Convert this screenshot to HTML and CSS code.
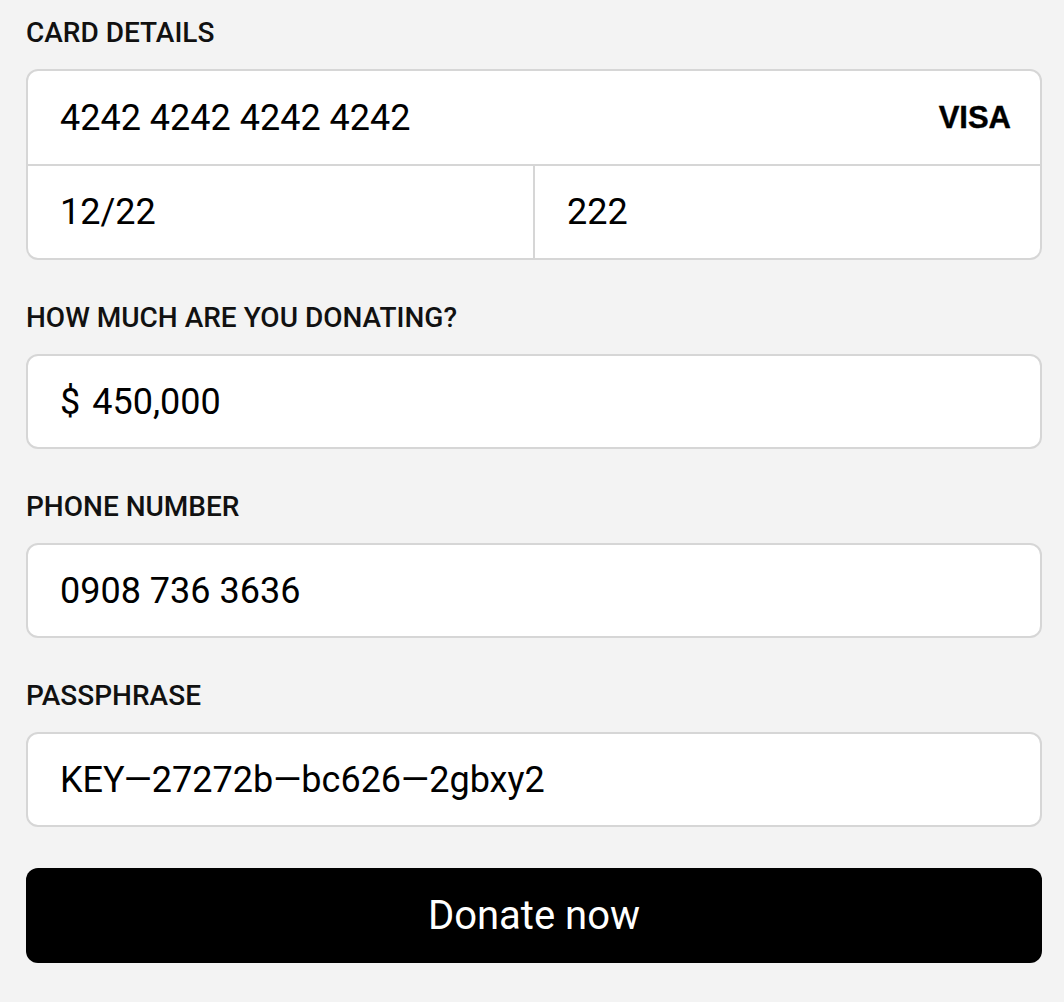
FILE: index.html
```html
<!DOCTYPE html>
<html lang="en">
<head>
<meta charset="utf-8">
<title>Donate</title>
<link rel="stylesheet" href="styles.css">
</head>
<body>
<form class="form">
  <div class="group">
    <div class="label">CARD DETAILS</div>
    <div class="card">
      <div class="card-row">
        <div class="cell cell-full">
          <span class="value">4242 4242 4242 4242</span>
          <span class="brand">VISA</span>
        </div>
      </div>
      <div class="card-row card-split">
        <div class="cell"><span class="value">12/22</span></div>
        <div class="cell cell-right"><span class="value">222</span></div>
      </div>
    </div>
  </div>

  <div class="group">
    <div class="label">HOW MUCH ARE YOU DONATING?</div>
    <div class="field"><span class="currency">$</span><span class="value">450,000</span></div>
  </div>

  <div class="group">
    <div class="label">PHONE NUMBER</div>
    <div class="field"><span class="value">0908 736 3636</span></div>
  </div>

  <div class="group">
    <div class="label">PASSPHRASE</div>
    <div class="field"><span class="value">KEY—27272b—bc626—2gbxy2</span></div>
  </div>

  <button type="button" class="donate">Donate now</button>
</form>
</body>
</html>
```

FILE: styles.css
```css
* {
  box-sizing: border-box;
}

html, body {
  margin: 0;
  padding: 0;
  background: #f3f3f3;
}

body {
  font-family: Roboto, "Liberation Sans", Arial, sans-serif;
  color: #000;
  padding: 18px 22px 0 26px;
}

.form {
  display: flex;
  flex-direction: column;
}

.group {
  display: flex;
  flex-direction: column;
  margin-bottom: 43px;
}

.label {
  font-size: 28px;
  line-height: 30px;
  font-weight: 500;
  color: #111;
  margin-bottom: 21px;
}

.card {
  background: #fff;
  border: 2px solid #d6d6d6;
  border-radius: 12px;
  display: flex;
  flex-direction: column;
}

.card-row {
  display: flex;
  height: 93px;
}

.card-row + .card-row {
  border-top: 2px solid #d6d6d6;
  height: 94px;
}

.card-split .cell {
  flex: 1 1 0;
}

.cell {
  display: flex;
  align-items: center;
  padding: 0 29px 0 32px;
}

.cell-full {
  flex: 1;
  justify-content: space-between;
}

.cell-right {
  border-left: 2px solid #d6d6d6;
}

.value {
  font-size: 36px;
  line-height: 42px;
}

.brand {
  font-family: "Liberation Sans", Arial, Helvetica, sans-serif;
  font-weight: 700;
  font-size: 31px;
  color: #000;
  -webkit-text-stroke: 0.4px #000;
}

.field {
  background: #fff;
  border: 2px solid #d6d6d6;
  border-radius: 12px;
  height: 95px;
  display: flex;
  align-items: center;
  padding: 0 32px;
}

.currency {
  font-size: 36px;
  line-height: 42px;
  margin-right: 12px;
}

.donate {
  margin-top: -2px;
  height: 95px;
  border: none;
  border-radius: 12px;
  background: #000;
  color: #fff;
  font-family: Roboto, "Liberation Sans", Arial, sans-serif;
  font-size: 40px;
  font-weight: 400;
  cursor: pointer;
}
```
